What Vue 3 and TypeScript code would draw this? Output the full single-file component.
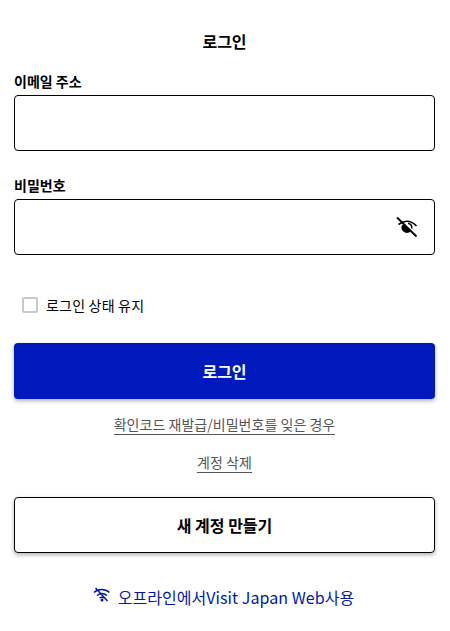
<script setup lang="ts">
const appName: string = 'Visit Japan Web'
</script>

<template>
  <main class="page">
    <h1 class="title">로그인</h1>
    <div class="field">
      <label class="label">이메일 주소</label>
      <div class="input"></div>
    </div>
    <div class="field second">
      <label class="label">비밀번호</label>
      <div class="input">
        <svg class="eye" viewBox="0 0 24 24" width="24" height="24">
          <path d="M3.500 9.500C7 7 9.500 6.300 12 6.300s6 1.200 9.500 4.700" fill="none" stroke="#000" stroke-width="1.600" />
          <path d="M6.800 10.500A5.500 5.500 0 0 0 14 17.500L15.500 16.800L8.500 9.500Z" fill="#000" />
          <path d="M2 2.500 21.500 21.500" stroke="#000" stroke-width="1.900" />
          <path d="M13 8.200A4.500 4.500 0 0 1 16.800 13.500" fill="none" stroke="#000" stroke-width="1.500" />
        </svg>
      </div>
    </div>
    <div class="keep">
      <span class="box"></span>
      <span>로그인 상태 유지</span>
    </div>
    <button class="primary">로그인</button>
    <div class="link-row first"><a class="link">확인코드 재발급/비밀번호를 잊은 경우</a></div>
    <div class="link-row second-link"><a class="link">계정 삭제</a></div>
    <button class="secondary">새 계정 만들기</button>
    <div class="offline">
      <svg class="wifi" viewBox="0 0 18 16" width="18" height="16">
        <path d="M1 5.500C5 1.500 12 1.500 16.500 5.500M4 8.500C7 6 11 6 14 8.500M6.500 11C8 10 10 10 11.500 11" fill="none" stroke="#0019a8" stroke-width="1.500" />
        <circle cx="9" cy="13" r="1.500" fill="#0019a8" />
        <path d="M2.500 1 14.500 14" stroke="#0019a8" stroke-width="1.500" />
      </svg>
      <span>오프라인에서{{ appName }}사용</span>
    </div>
  </main>
</template>

<style scoped>
.page {
  width: 450px;
  height: 631px;
  box-sizing: border-box;
  padding: 30px 15px 0 14px;
  font-family: "Noto Sans CJK KR", "Noto Sans", sans-serif;
  color: #000;
  overflow: hidden;
  background: #fff;
}
.title {
  margin: 0;
  font-size: 16px;
  line-height: 22px;
  font-weight: 700;
  text-align: center;
}
.field { margin-top: 19px; }
.field.second { margin-top: 24px; }
.label {
  display: block;
  font-size: 14px;
  line-height: 20px;
  font-weight: 700;
  margin-bottom: 4px;
}
.input {
  height: 56px;
  box-sizing: border-box;
  border: 1px solid #000;
  border-radius: 4px;
  display: flex;
  align-items: center;
  justify-content: flex-end;
  padding-right: 15px;
  background: #fff;
}
.eye { display: block; margin-top: -1px; }
.keep {
  margin-top: 39px;
  padding-left: 8px;
  display: flex;
  align-items: center;
  gap: 8px;
  font-size: 14px;
  letter-spacing: .2px;
  line-height: 22px;
}
.box {
  width: 16px;
  height: 16px;
  border: 2px solid #c8c8c8;
  border-radius: 2px;
  box-sizing: border-box;
  background: #fff;
}
.primary,
.secondary {
  display: block;
  width: 100%;
  height: 56px;
  border-radius: 4px;
  font-family: inherit;
  font-weight: 700;
  font-size: 16px;
  padding: 0;
  cursor: pointer;
}
.primary {
  margin-top: 27px;
  background: #0019bd;
  color: #fff;
  border: none;
  box-shadow: 0 2px 4px rgba(0, 0, 0, .3);
}
.secondary {
  margin-top: 24px;
  background: #fff;
  color: #000;
  border: 1px solid #000;
  box-shadow: 0 2px 4px rgba(0, 0, 0, .3);
}
.link-row {
  text-align: center;
  line-height: 0;
}
.link-row.first { margin-top: 15px; }
.link-row.second-link { margin-top: 17px; }
.link {
  display: inline-block;
  font-size: 14px;
  letter-spacing: .03px;
  line-height: 20px;
  color: #555;
  border-bottom: 1px solid #555;
}
.offline {
  margin-top: 33px;
  display: flex;
  justify-content: center;
  align-items: center;
  gap: 7px;
  font-size: 16px;
  letter-spacing: .06px;
  line-height: 22px;
  color: #0019a8;
}
.wifi { margin-top: -5px; margin-left: -2px; }
</style>
